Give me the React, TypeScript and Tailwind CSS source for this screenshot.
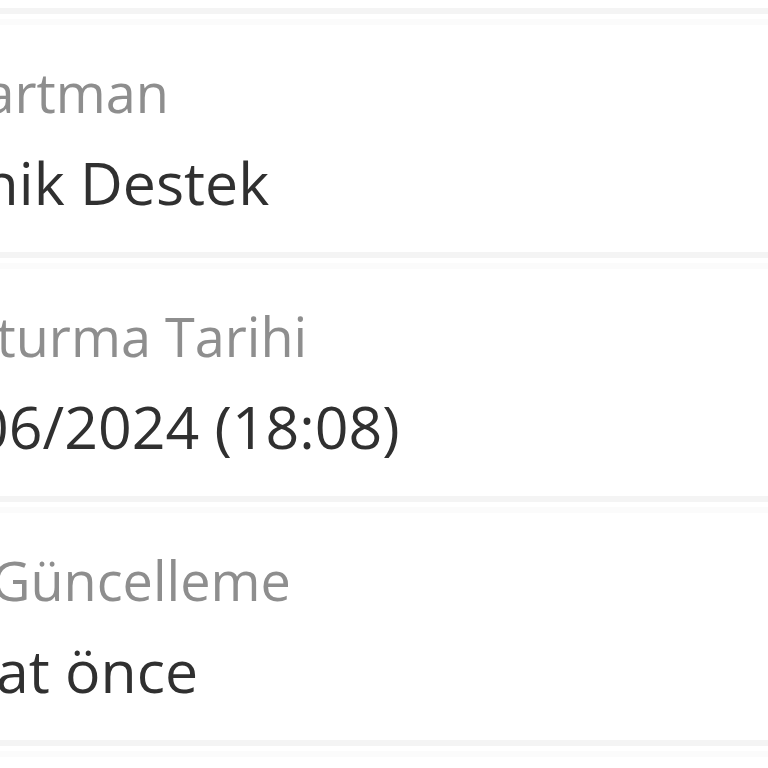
import React from 'react';

type InfoRow = {
  label: string;
  value: string;
};

const rows: InfoRow[] = [
  { label: 'Departman', value: 'Teknik Destek' },
  { label: 'Oluşturma Tarihi', value: '12/06/2024 (18:08)' },
  { label: 'Son Güncelleme', value: '2 saat önce' },
];

const Divider: React.FC = () => (
  <div>
    <div className="h-[6px] bg-[#f4f4f4]" />
    <div className="mt-[5px] h-[6px] bg-[#fbfbfb]" />
  </div>
);

export default function App() {
  return (
    <div
      className="w-[768px] h-[768px] overflow-hidden bg-white"
      style={{ fontFamily: '"Open Sans", "Noto Sans", sans-serif' }}
    >
      <div className="pt-[8px]">
        {rows.map((row) => (
          <div key={row.label} className="h-[244px]">
            <Divider />
            <div className="pt-[31px] whitespace-nowrap">
              <div className="ml-[-118px] text-[54px] leading-[72px] text-[#8e8e8e]">{row.label}</div>
              <div className="ml-[-114px] mt-[14px] text-[59px] leading-[80px] text-[#303030]">{row.value}</div>
            </div>
          </div>
        ))}
        <Divider />
      </div>
    </div>
  );
}
